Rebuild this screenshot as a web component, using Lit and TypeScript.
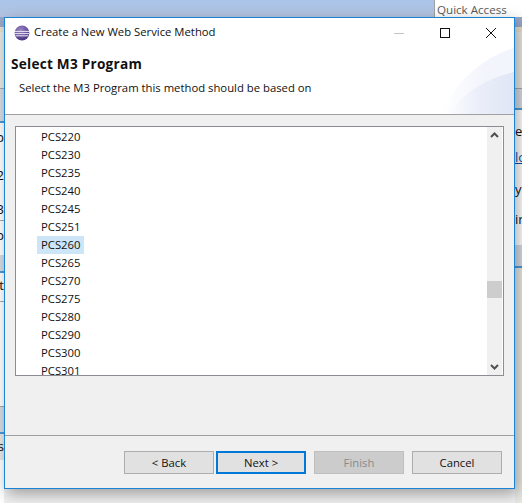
import { LitElement, html, css, svg } from 'lit';
import { customElement } from 'lit/decorators.js';

const programs = [
  'PCS220', 'PCS230', 'PCS235', 'PCS240', 'PCS245', 'PCS251', 'PCS260', 'PCS265',
  'PCS270', 'PCS275', 'PCS280', 'PCS290', 'PCS300', 'PCS301',
];

const eclipseIcon = svg`
  <svg class="app-icon" width="16" height="16" viewBox="0 0 16 16">
    <defs>
      <radialGradient id="ball" cx="0.4" cy="0.3" r="0.8">
        <stop offset="0" stop-color="#9a86c4"></stop>
        <stop offset="1" stop-color="#3d2a78"></stop>
      </radialGradient>
    </defs>
    <circle cx="8" cy="8" r="7.4" fill="url(#ball)"></circle>
    <path d="M1 6.4h14M.8 8.6h14.4M1.6 10.8h12.8" stroke="#ebe6f4" stroke-width="1" fill="none"></path>
  </svg>
`;

@customElement('app-root')
export class AppRoot extends LitElement {
  static styles = css`
    :host {
      display: block;
      position: relative;
      width: 522px;
      height: 503px;
      overflow: hidden;
      background: #f0f0f0;
      font-family: 'Open Sans', 'Noto Sans', sans-serif;
      font-size: 11.3px;
      color: #111;
    }
    .topbar {
      display: flex;
      justify-content: flex-end;
      height: 17px;
      background: linear-gradient(#a9c5ea, #b4c3e0);
    }
    .quick {
      width: 88px;
      box-sizing: border-box;
      border-left: 1px solid #a0a0a0;
      background: #fff;
      padding-left: 2px;
      color: #5a5a5a;
      font-size: 11.6px;
      line-height: 20px;
    }
    .desk {
      display: flex;
      justify-content: space-between;
      height: 486px;
    }
    .strip {
      display: flex;
      flex-direction: column;
      overflow: hidden;
      background: #fff;
      font-size: 13px;
    }
    .strip.left { width: 4px; }
    .strip.right { width: 7px; }
    .strip > div { flex: none; box-sizing: border-box; line-height: 1; white-space: nowrap; }
    .strip.left > div { direction: rtl; }
    .pale { background: #e8e8e4; }
    .grey { background: #d6dce4; }
    .slate { background: #9aa8c6; }
    .sand { background: #e6e0cc; }
    .bluebar { background: #4c9ad8; }
    .rule { background: #a8a8a8; }
    .linked { color: #0b4fa8; text-decoration: underline; }
    .dialog {
      position: absolute;
      left: 4px;
      top: 17px;
      width: 511px;
      height: 472px;
      box-sizing: border-box;
      display: flex;
      flex-direction: column;
      border: 1px solid #1883d7;
      background: #f0f0f0;
      box-shadow: 3px 5px 14px rgba(0, 0, 0, 0.34);
    }
    .titlebar {
      display: flex;
      align-items: center;
      height: 29px;
      flex: none;
      background: #fff;
      padding-left: 9px;
    }
    .title-text { margin-left: 4px; flex: 1; line-height: 27px; height: 29px; }
    .controls { display: flex; align-items: center; }
    .ctl { width: 46px; display: flex; justify-content: center; }
    .banner {
      position: relative;
      height: 68px;
      flex: none;
      box-sizing: border-box;
      background: #fff;
      border-bottom: 1px solid #a0a0a0;
      padding: 8px 6px;
    }
    .banner h1 { margin: 0; font-size: 13.6px; line-height: 18px; font-weight: 700; letter-spacing: 0.25px; }
    .banner p { margin: 6px 0 0 8px; line-height: 18px; }
    .swoosh { position: absolute; right: 0; bottom: 0; }
    .body { flex: 1; padding: 11px 10px 0; height: 0; }
    .listbox {
      display: flex;
      height: 250px;
      box-sizing: border-box;
      border: 1px solid #8c8c94;
      background: #fff;
      overflow: hidden;
    }
    .items { flex: 1; overflow: hidden; padding: 1px 0 0 21px; }
    .item { width: max-content; height: 18px; line-height: 17px; padding: 0 4px; }
    .item.sel { background: #cde6f7; }
    .scroll {
      position: relative;
      display: flex;
      flex-direction: column;
      justify-content: space-between;
      align-items: center;
      width: 15px;
      margin-right: 1px;
      background: #f0f0f0;
      padding: 5px 0;
      box-sizing: border-box;
    }
    .thumb {
      position: absolute;
      left: 0;
      top: 154px;
      width: 15px;
      height: 17px;
      background: #cdcdcd;
    }
    .footer {
      flex: none;
      height: 53px;
      box-sizing: border-box;
      border-top: 1px solid #a0a0a0;
      display: flex;
      justify-content: flex-end;
      padding: 15px 12px 0 0;
    }
    .btn {
      width: 90px;
      height: 23px;
      box-sizing: border-box;
      border: 1px solid #adadad;
      background: #e1e1e1;
      font: inherit;
      color: #111;
      padding: 0 0 1px;
      margin-left: 8px;
    }
    .btn.back + .btn { margin-left: 2px; border: 2px solid #0078d7; }
    .btn:disabled { background: #cccccc; border-color: #bfbfbf; color: #8a8a8a; }
  `;

  render() {
    return html`
      <div class="topbar"><div class="quick">Quick Access</div></div>
      <div class="desk">
        <div class="strip left">
          <div class="slate" style="height:10px"></div>
          <div class="sand" style="height:5px"></div>
          <div class="pale" style="height:56px"></div>
          <div class="rule" style="height:1px"></div>
          <div class="grey" style="height:32px"></div>
          <div class="bluebar" style="height:2px"></div>
          <div style="height:46px;padding-top:8px">p</div>
          <div style="height:34px">2</div>
          <div style="height:17px">3</div>
          <div class="rule" style="height:1px"></div>
          <div style="height:34px;padding-top:8px">p</div>
          <div class="grey" style="height:16px"></div>
          <div class="bluebar" style="height:2px"></div>
          <div style="height:28px;padding-top:6px">t</div>
          <div class="rule" style="height:1px"></div>
          <div style="height:104px"></div>
          <div class="rule" style="height:1px"></div>
          <div class="grey" style="height:25px"></div>
          <div class="bluebar" style="height:2px"></div>
          <div class="pale" style="height:26px;padding-top:6px">s</div>
        </div>
        <div class="strip right">
          <div class="slate" style="height:10px"></div>
          <div class="sand" style="height:5px"></div>
          <div class="pale" style="height:56px"></div>
          <div class="rule" style="height:1px"></div>
          <div class="grey" style="height:19px"></div>
          <div class="bluebar" style="height:2px"></div>
          <div style="height:32px;padding-top:15px">e</div>
          <div class="linked" style="height:32px;padding-top:9px">lo</div>
          <div style="height:31px;padding-top:9px">y</div>
          <div style="height:40px;padding-top:8px">ir</div>
          <div class="grey" style="height:21px"></div>
          <div class="bluebar" style="height:2px"></div>
          <div class="pale" style="height:235px"></div>
        </div>
      </div>
      <div class="dialog">
        <div class="titlebar">
          ${eclipseIcon}
          <span class="title-text">Create a New Web Service Method</span>
          <div class="controls">
            <div class="ctl">
              <svg width="10" height="10" viewBox="0 0 10 10"><path d="M0 5.5h10" stroke="#c4c4c4" fill="none"></path></svg>
            </div>
            <div class="ctl">
              <svg width="10" height="10" viewBox="0 0 10 10"><rect x=".5" y=".5" width="9" height="9" stroke="#111" fill="none"></rect></svg>
            </div>
            <div class="ctl">
              <svg width="10" height="10" viewBox="0 0 10 10"><path d="M0 0l10 10M10 0L0 10" stroke="#111" fill="none"></path></svg>
            </div>
          </div>
        </div>
        <div class="banner">
          <h1>Select M3 Program</h1>
          <p>Select the M3 Program this method should be based on</p>
          <svg class="swoosh" width="74" height="66" viewBox="0 0 74 66">
            <defs>
              <linearGradient id="fade1" x1="0" x2="1" y1="0" y2="0">
                <stop offset="0" stop-color="#f3f5fc" stop-opacity="0"></stop>
                <stop offset="0.6" stop-color="#f3f5fc"></stop>
              </linearGradient>
              <linearGradient id="fade2" x1="0" x2="1" y1="0" y2="0">
                <stop offset="0" stop-color="#e0e6f6" stop-opacity="0"></stop>
                <stop offset="1" stop-color="#e0e6f6"></stop>
              </linearGradient>
            </defs>
            <path d="M0 66C16 34 42 10 74 0V66Z" fill="url(#fade1)"></path>
            <path d="M8 66C24 44 48 30 74 24V66Z" fill="url(#fade2)"></path>
          </svg>
        </div>
        <div class="body">
          <div class="listbox">
            <div class="items">
              ${programs.map((name) => html`<div class="item ${name === 'PCS260' ? 'sel' : ''}">${name}</div>`)}
            </div>
            <div class="scroll">
              <svg width="9" height="6" viewBox="0 0 9 6"><path d="M1 5l3.5-3.5L8 5" stroke="#505050" stroke-width="2" fill="none"></path></svg>
              <div class="thumb"></div>
              <svg width="9" height="6" viewBox="0 0 9 6"><path d="M1 1l3.5 3.5L8 1" stroke="#505050" stroke-width="2" fill="none"></path></svg>
            </div>
          </div>
        </div>
        <div class="footer">
          <button class="btn back" type="button">&lt; Back</button>
          <button class="btn" type="button">Next &gt;</button>
          <button class="btn" type="button" disabled>Finish</button>
          <button class="btn" type="button">Cancel</button>
        </div>
      </div>
    `;
  }
}
